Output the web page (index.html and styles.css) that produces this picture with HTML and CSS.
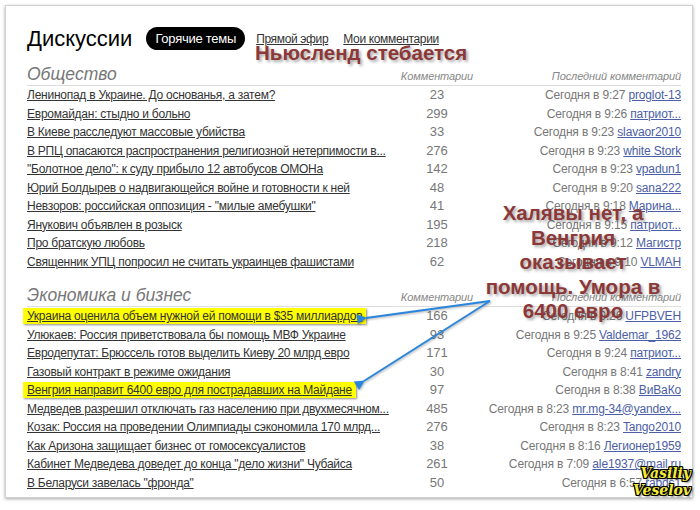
FILE: index.html
```html
<!DOCTYPE html>
<html lang="ru">
<head>
<meta charset="utf-8">
<title>Дискуссии</title>
<link rel="stylesheet" href="styles.css">
</head>
<body>
<div class="card">
  <div class="header">
    <h1 class="title">Дискуссии</h1>
    <span class="pill">Горячие темы</span>
    <a class="nav" href="#">Прямой эфир</a>
    <a class="nav" href="#">Мои комментарии</a>
  </div>

  <div class="section">
    <div class="sec-head">
      <h2 class="sec-title">Общество</h2>
      <span class="col-c">Комментарии</span>
      <span class="col-l">Последний комментарий</span>
    </div>
    <div class="row"><a class="t" href="#">Ленинопад в Украине. До основанья, а затем?</a><span class="c">23</span><span class="l">Сегодня в 9:27 <a href="#">proglot-13</a></span></div>
    <div class="row"><a class="t" href="#">Евромайдан: стыдно и больно</a><span class="c">299</span><span class="l">Сегодня в 9:26 <a href="#">патриот...</a></span></div>
    <div class="row"><a class="t" href="#">В Киеве расследуют массовые убийства</a><span class="c">33</span><span class="l">Сегодня в 9:23 <a href="#">slavaor2010</a></span></div>
    <div class="row"><a class="t" href="#">В РПЦ опасаются распространения религиозной нетерпимости в...</a><span class="c">276</span><span class="l">Сегодня в 9:23 <a href="#">white Stork</a></span></div>
    <div class="row"><a class="t" href="#">"Болотное дело": к суду прибыло 12 автобусов ОМОНа</a><span class="c">142</span><span class="l">Сегодня в 9:23 <a href="#">vpadun1</a></span></div>
    <div class="row"><a class="t" href="#">Юрий Болдырев о надвигающейся войне и готовности к ней</a><span class="c">48</span><span class="l">Сегодня в 9:20 <a href="#">sana222</a></span></div>
    <div class="row"><a class="t" href="#">Невзоров: российская оппозиция - "милые амебушки"</a><span class="c">41</span><span class="l">Сегодня в 9:18 <a href="#">Марина...</a></span></div>
    <div class="row"><a class="t" href="#">Янукович объявлен в розыск</a><span class="c">195</span><span class="l">Сегодня в 9:15 <a href="#">патриот...</a></span></div>
    <div class="row"><a class="t" href="#">Про братскую любовь</a><span class="c">218</span><span class="l">Сегодня в 9:12 <a href="#">Магистр</a></span></div>
    <div class="row"><a class="t" href="#">Священник УПЦ попросил не считать украинцев фашистами</a><span class="c">62</span><span class="l">Сегодня в 9:10 <a href="#">VLMAH</a></span></div>
  </div>

  <div class="section">
    <div class="sec-head">
      <h2 class="sec-title">Экономика и бизнес</h2>
      <span class="col-c">Комментарии</span>
      <span class="col-l">Последний комментарий</span>
    </div>
    <div class="row"><span class="tw"><a class="t hl" href="#">Украина оценила объем нужной ей помощи в $35 миллиардов</a></span><span class="c">166</span><span class="l">Сегодня в 9:26 <a href="#">UFPBVEH</a></span></div>
    <div class="row"><a class="t" href="#">Улюкаев: Россия приветствовала бы помощь МВФ Украине</a><span class="c">93</span><span class="l">Сегодня в 9:25 <a href="#">Valdemar_1962</a></span></div>
    <div class="row"><a class="t" href="#">Евродепутат: Брюссель готов выделить Киеву 20 млрд евро</a><span class="c">171</span><span class="l">Сегодня в 9:24 <a href="#">патриот...</a></span></div>
    <div class="row"><a class="t" href="#">Газовый контракт в режиме ожидания</a><span class="c">30</span><span class="l">Сегодня в 8:41 <a href="#">zandry</a></span></div>
    <div class="row"><span class="tw"><a class="t hl" href="#">Венгрия направит 6400 евро для пострадавших на Майдане</a></span><span class="c">97</span><span class="l">Сегодня в 8:38 <a href="#">ВиВаКо</a></span></div>
    <div class="row"><a class="t" href="#">Медведев разрешил отключать газ населению при двухмесячном...</a><span class="c">485</span><span class="l">Сегодня в 8:23 <a href="#">mr.mg-34@yandex...</a></span></div>
    <div class="row"><a class="t" href="#">Козак: Россия на проведении Олимпиады сэкономила 170 млрд...</a><span class="c">276</span><span class="l">Сегодня в 8:23 <a href="#">Tango2010</a></span></div>
    <div class="row"><a class="t" href="#">Как Аризона защищает бизнес от гомосексуалистов</a><span class="c">38</span><span class="l">Сегодня в 8:16 <a href="#">Легионер1959</a></span></div>
    <div class="row"><a class="t" href="#">Кабинет Медведева доведет до конца "дело жизни" Чубайса</a><span class="c">261</span><span class="l">Сегодня в 7:09 <a href="#">ale1937@mail.ru</a></span></div>
    <div class="row"><a class="t" href="#">В Беларуси завелась "фронда"</a><span class="c">50</span><span class="l">Сегодня в 6:57 <a href="#">rabds1</a></span></div>
  </div>
</div>

<div class="note note-top">Ньюсленд стебается</div>
<div class="note note-side">Халявы нет, а<br>Венгрия<br>оказывает<br>помощь. Умора в<br>6400 евро</div>

<svg class="arrows" width="700" height="510" viewBox="0 0 700 510" xmlns="http://www.w3.org/2000/svg">
  <defs>
    <marker id="ah" viewBox="0 0 10 10" refX="1" refY="5" markerWidth="6" markerHeight="5" orient="auto-start-reverse" markerUnits="strokeWidth">
      <path d="M0,5 L10,0 L10,10 Z" fill="#2a86dc"/>
    </marker>
  </defs>
  <line x1="490" y1="301" x2="366" y2="318" stroke="#2a86dc" stroke-width="2" marker-end="url(#ah)"/>
  <line x1="490" y1="301" x2="364" y2="381" stroke="#2a86dc" stroke-width="2" marker-end="url(#ah)"/>
</svg>

<div class="mark"><span>Vasiliy</span><span class="m2">Veselov</span></div>
</body>
</html>
```

FILE: styles.css
```css
html, body {
  margin: 0;
  padding: 0;
  background: #ffffff;
}

body {
  font-family: "Liberation Sans", Arial, sans-serif;
  color: #333;
  width: 700px;
  height: 510px;
  overflow: hidden;
}

.card {
  margin: 5px;
  width: 688px;
  height: 493px;
  box-sizing: border-box;
  border: 1px solid #d2d2d2;
  box-shadow: 0 1px 3px rgba(0, 0, 0, 0.35);
  padding: 21px 11px 0 21px;
  background: #fff;
}

.header {
  display: flex;
  align-items: center;
  height: 23px;
}

.title {
  margin: 0 14px 0 0;
  font-size: 22px;
  line-height: 24px;
  font-weight: normal;
  color: #000;
}

.pill {
  display: inline-flex;
  align-items: center;
  height: 23px;
  padding: 0 9px;
  border-radius: 12px;
  background: #000;
  color: #fff;
  font-size: 13px;
  letter-spacing: -0.25px;
  margin-right: 11px;
}

.nav {
  font-size: 12px;
  letter-spacing: -0.35px;
  line-height: 16px;
  color: #333;
  text-decoration: underline;
  margin-right: 15px;
}

.section {
  margin-top: 13px;
}

.sec-head,
.row {
  display: grid;
  grid-template-columns: 365px 90px 1fr;
}

.sec-head {
  align-items: baseline;
  height: 22px;
  border-bottom: 1px solid #dedede;
}

.sec-title {
  margin: 0;
  font-size: 17.5px;
  line-height: 22px;
  font-style: italic;
  font-weight: normal;
  color: #777;
}

.col-c,
.col-l {
  font-size: 11px;
  letter-spacing: -0.1px;
  font-style: italic;
  color: #888;
}

.col-c {
  text-align: center;
}

.col-l {
  text-align: right;
}

.row {
  height: 18.5px;
  line-height: 18.5px;
  font-size: 12px;
  letter-spacing: -0.25px;
  white-space: nowrap;
}

.t {
  color: #333;
  text-decoration: underline;
  overflow: hidden;
}

.tw {
  overflow: visible;
}

.hl {
  background: #ffff00;
  padding: 1px 4px;
  margin-left: -4px;
  box-shadow: 1px 1px 2px rgba(0, 0, 0, 0.45);
}

.c {
  text-align: center;
  color: #777;
  font-size: 13px;
  letter-spacing: 0;
}

.l {
  text-align: right;
  color: #777;
  letter-spacing: -0.15px;
}

.l a {
  color: #4b5ea6;
  text-decoration: underline;
}

.note {
  position: absolute;
  font-family: "Liberation Sans", Arial, sans-serif;
  font-weight: bold;
  color: #8c3838;
  text-shadow: 2px 2px 3px rgba(0, 0, 0, 0.35);
  white-space: nowrap;
}

.note-top {
  left: 255px;
  top: 41px;
  font-size: 20.5px;
  line-height: 24px;
}

.note-side {
  left: 463px;
  top: 201px;
  width: 220px;
  font-size: 20.5px;
  line-height: 24.5px;
  text-align: center;
}

.arrows {
  position: absolute;
  left: 0;
  top: 0;
  pointer-events: none;
  filter: drop-shadow(1px 1px 1px rgba(0, 0, 0, 0.3));
}

.mark {
  position: absolute;
  left: 624px;
  top: 465px;
  display: flex;
  flex-direction: column;
  align-items: flex-end;
  width: 67px;
  font-family: "DejaVu Serif", serif;
  font-weight: bold;
  font-style: italic;
  font-size: 14px;
  line-height: 17px;
  color: #f4ea3c;
  text-shadow: -1px -1px 0 #000, 1px -1px 0 #000, -1px 1px 0 #000, 1px 1px 0 #000, 0 1px 0 #000, 1px 0 0 #000, 0 -1px 0 #000, -1px 0 0 #000, 2px 2px 2px rgba(0,0,0,0.5);
}
```
